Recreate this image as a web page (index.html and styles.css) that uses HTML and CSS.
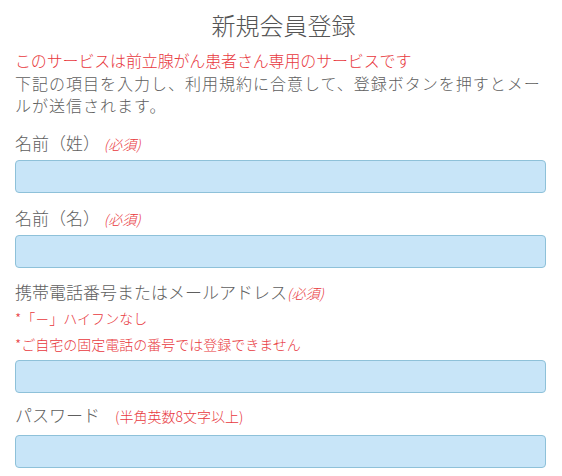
FILE: index.html
```html
<!DOCTYPE html>
<html>
<head>
<meta charset="utf-8">
<title>新規会員登録</title>
<link rel="stylesheet" href="styles.css">
</head>
<body>
<main class="page">
  <h1 class="title">新規会員登録</h1>
  <p class="notice">このサービスは前立腺がん患者さん専用のサービスです</p>
  <p class="lead">下記の項目を入力し、利用規約に合意して、登録ボタンを押すとメールが送信されます。</p>

  <form class="form">
    <div class="field field-first">
      <label class="label">名前（姓） <span class="req">(必須)</span></label>
      <input class="input" type="text">
    </div>
    <div class="field">
      <label class="label">名前（名） <span class="req">(必須)</span></label>
      <input class="input" type="text">
    </div>
    <div class="field field-phone">
      <label class="label">携帯電話番号またはメールアドレス<span class="req">(必須)</span></label>
      <p class="note">*「－」ハイフンなし</p>
      <p class="note note-last">*ご自宅の固定電話の番号では登録できません</p>
      <input class="input" type="text">
    </div>
    <div class="field field-pw">
      <label class="label">パスワード<span class="hint">(半角英数8文字以上)</span></label>
      <input class="input" type="password">
    </div>
  </form>
</main>
</body>
</html>
```

FILE: styles.css
```css
html, body {
  margin: 0;
  padding: 0;
  background: #ffffff;
}

body {
  font-family: "Noto Sans CJK JP", "Noto Sans", sans-serif;
  font-weight: 300;
  color: #5e5e5e;
}

.page {
  padding: 0 16px 0 15px;
}

.title {
  margin: 7px 0 0;
  padding-left: 6px;
  font-size: 24px;
  line-height: 36px;
  font-weight: 300;
  text-align: center;
  color: #555555;
}

.notice {
  margin: 6px 0 0;
  font-size: 16px;
  line-height: 22px;
  letter-spacing: -0.15px;
  color: #e8383d;
}

.lead {
  margin: 1px 0 0;
  font-size: 16px;
  line-height: 22px;
  letter-spacing: 1px;
  line-break: loose;
}

.form {
  margin-top: 14px;
}

.field {
  display: flex;
  flex-direction: column;
  margin-top: 12px;
}

.field-first {
  margin-top: 0;
}

.field-phone {
  margin-top: 11px;
}

.field-pw {
  margin-top: 9px;
}

.label {
  font-size: 17px;
  line-height: 26px;
  margin-bottom: 4px;
}

.field-phone .label {
  margin-bottom: 0;
}

.field-pw .label {
  margin-bottom: 7px;
}

.req {
  font-size: 14px;
  line-height: 1;
  font-style: italic;
  color: #e8383d;
}

.hint {
  font-size: 14px;
  line-height: 1;
  margin-left: 15px;
  color: #e8383d;
}

.note {
  margin: 0;
  font-size: 14px;
  line-height: 26px;
  color: #e8383d;
}

.note-last {
  margin-bottom: 3px;
}

.input {
  box-sizing: border-box;
  width: 100%;
  height: 33px;
  margin: 0;
  padding: 4px 8px;
  border: 1px solid #8ec1d9;
  border-radius: 4px;
  background: #c8e5f8;
  font: inherit;
  outline: none;
}
```
